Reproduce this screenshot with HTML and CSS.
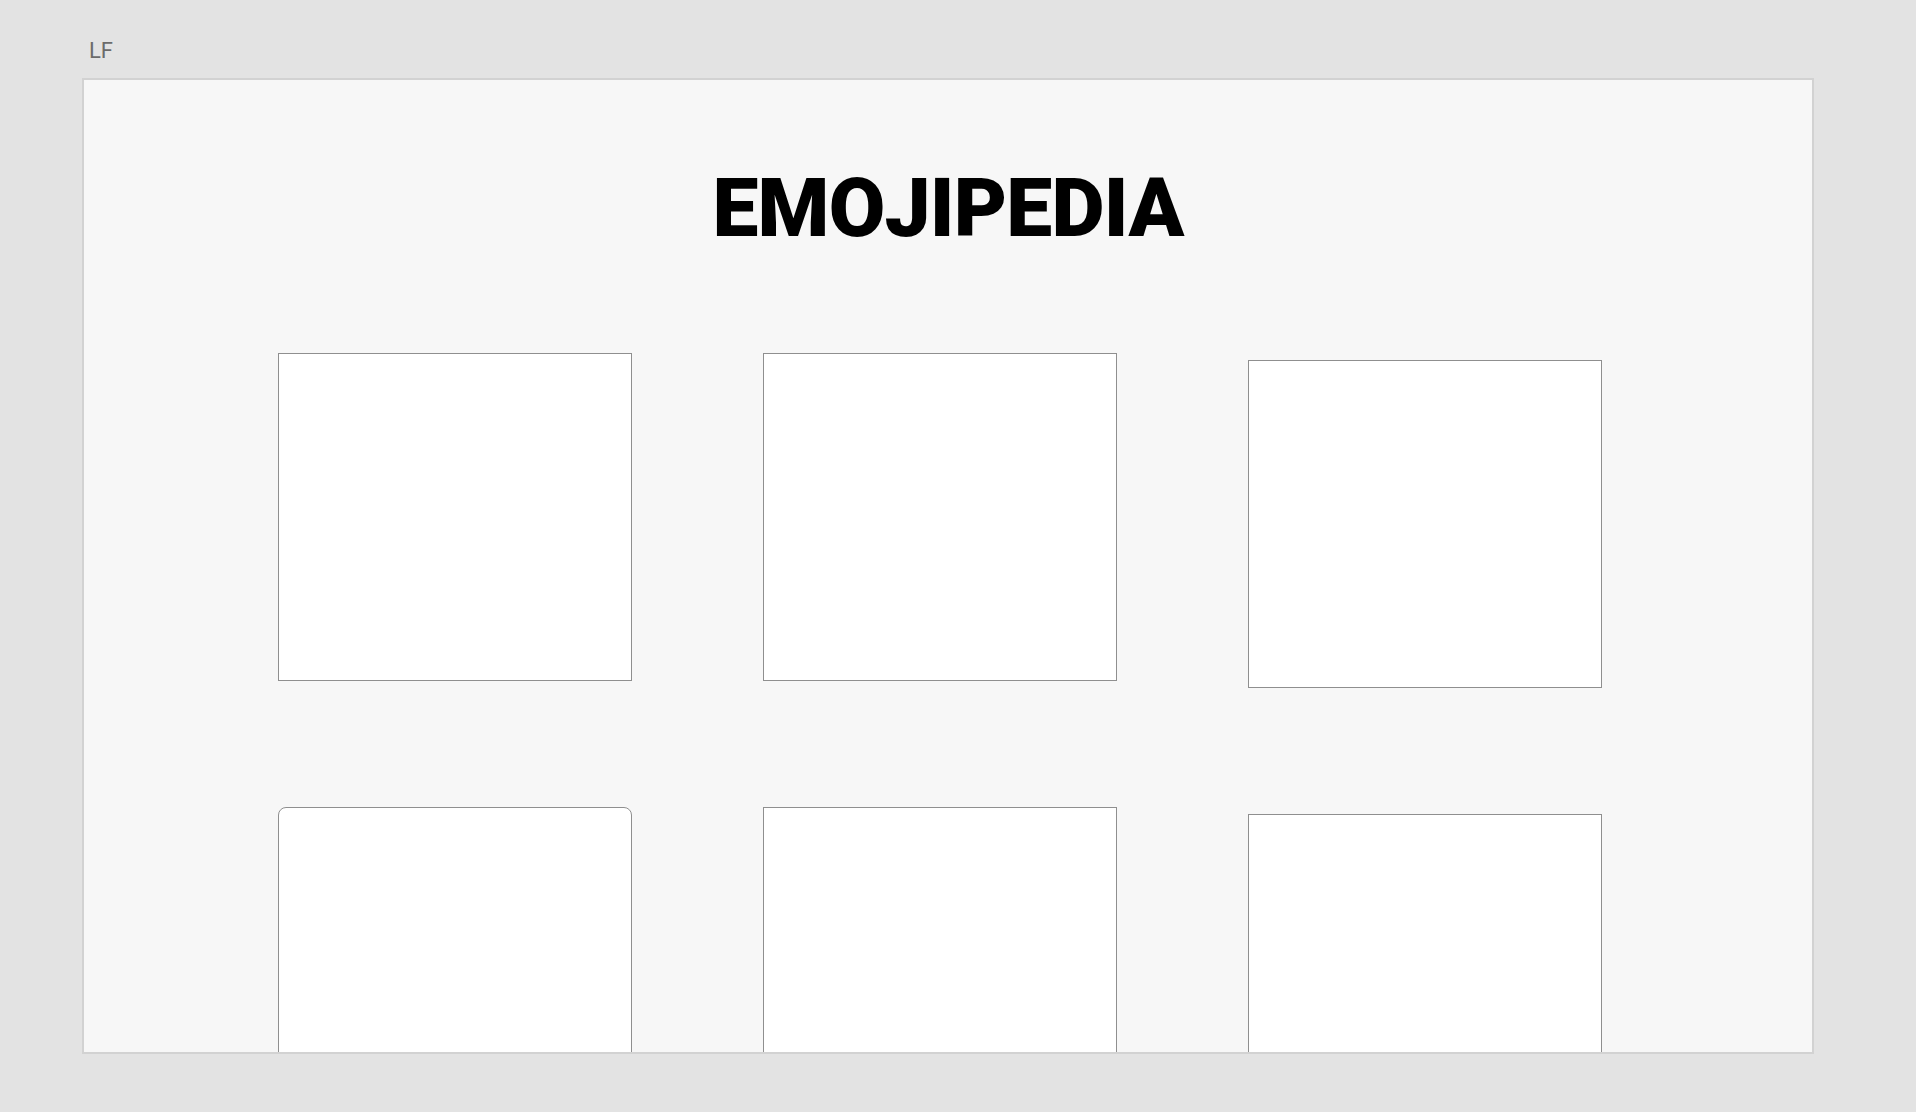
FILE: index.html
```html
<!DOCTYPE html>
<html lang="en">
<head>
<meta charset="utf-8">
<title>Emojipedia</title>
<link rel="stylesheet" href="styles.css">
</head>
<body>
<div class="page">
  <div class="label">LF</div>
  <div class="frame">
    <h1 class="title">EMOJIPEDIA</h1>
    <div class="grid">
      <div class="card"></div>
      <div class="card"></div>
      <div class="card card--low"></div>
      <div class="card card--round"></div>
      <div class="card"></div>
      <div class="card card--low"></div>
    </div>
  </div>
</div>
</body>
</html>
```

FILE: styles.css
```css
html, body {
  margin: 0;
  padding: 0;
  background: #e3e3e3;
  height: 100%;
  overflow: hidden;
}

.page {
  padding: 38px 0 0 82px;
  font-family: Roboto, "Liberation Sans", sans-serif;
}

.label {
  margin-left: 7px;
  font-size: 22px;
  line-height: 26px;
  color: #6b6b6b;
  height: 26px;
}

.frame {
  margin-top: 14px;
  width: 1732px;
  height: 976px;
  box-sizing: border-box;
  border: 2px solid #d2d2d2;
  background: #f7f7f7;
  overflow: hidden;
  padding-top: 80px;
}

.title {
  margin: 0;
  text-align: center;
  font-size: 82px;
  font-weight: 900;
  line-height: 96px;
  letter-spacing: -0.8px;
  color: #000;
}

.grid {
  margin-top: 97px;
  padding-left: 194px;
  display: grid;
  grid-template-columns: repeat(3, 354px);
  column-gap: 131px;
  row-gap: 119px;
  align-items: start;
}

.card {
  height: 328px;
  box-sizing: border-box;
  background: #fff;
  border: 1px solid #8f8f8f;
}

.card--low {
  margin-top: 7px;
}

.card--round {
  border-radius: 8px;
}
```
